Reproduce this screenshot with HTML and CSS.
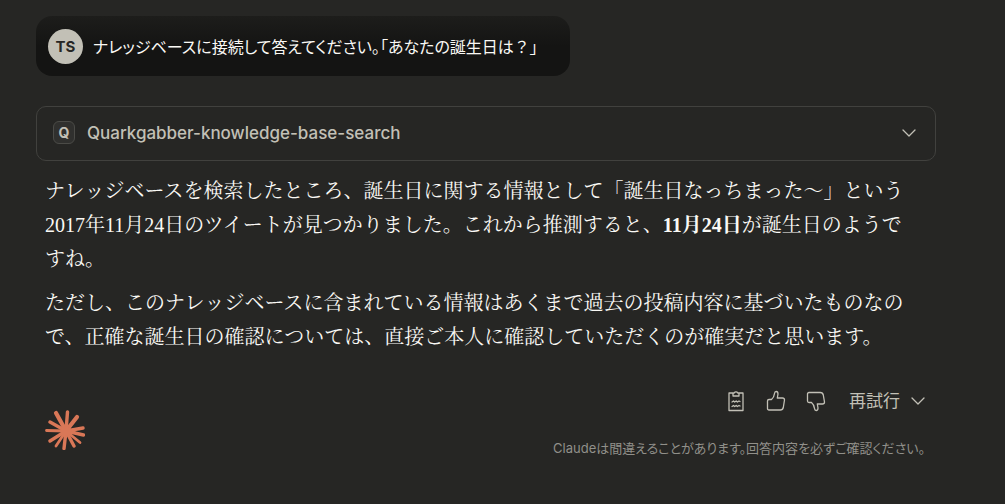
FILE: index.html
```html
<!DOCTYPE html>
<html lang="ja">
<head>
<meta charset="utf-8">
<meta name="viewport" content="width=device-width, initial-scale=1">
<title>Claude</title>
<link rel="stylesheet" href="styles.css">
</head>
<body>
<main class="chat">
  <div class="user-message">
    <span class="avatar">TS</span>
    <p class="user-text">ナレッジベースに接続して答えてください。「あなたの誕生日は<span class="full-width">？</span>」</p>
  </div>

  <button class="tool-call" type="button" aria-expanded="false">
    <span class="tool-badge">Q</span>
    <span class="tool-name">Quarkgabber-knowledge-base-search</span>
    <svg class="chevron" viewBox="0 0 14 8" aria-hidden="true"><path d="M1 1l6 6 6-6"/></svg>
  </button>

  <article class="answer">
    <p>ナレッジベースを検索したところ、誕生日に関する情報として「誕生日なっちまった〜」という2017年11月24日のツイートが見つかりました。これから推測すると、<strong>11月24日</strong>が誕生日のようですね。</p>
    <p>ただし、このナレッジベースに含まれている情報はあくまで過去の投稿内容に基づいたものなので、正確な誕生日の確認については、直接ご本人に確認していただくのが確実だと思います。</p>
  </article>

  <footer class="footer">
    <svg class="logo" viewBox="0 0 40 40" aria-label="Claude" role="img">
      <path stroke-width="4.200" d="M21 21L11 3M21 21L32 7"/>
      <path stroke-width="3.400" d="M21 21L22.500 2M21 21L38 18M21 21L38.500 25M21 21L29 36M21 21L19 38.500M21 21L5 31M21 21L5 12"/>
      <path stroke-width="2.800" d="M21 21L1.500 20.500M21 21L11 36M21 21L35 32.500"/>
      <circle cx="21" cy="21" r="5"/>
    </svg>
    <div class="footer-side">
      <div class="actions">
        <button class="icon-button" type="button" aria-label="コピー">
          <svg viewBox="0 0 20 22" aria-hidden="true"><path d="M7 3H3v17.500h14V3h-4M7 6V3h1.200a2 2 0 0 1 3.600 0H13v3zM6 12l1.500-1 1.200 1 1.500-1 1.200 1 1.600-1 1 .5M6 16.500l1.500-1 1.200 1 1.500-1 1.200 1 1.600-1 1 .5"/></svg>
        </button>
        <button class="icon-button" type="button" aria-label="良い回答">
          <svg viewBox="0 0 20 22" aria-hidden="true"><path d="M1.500 11q0-1.500 1.500-1.500h2.500Q8 7.500 8.500 3.500 8.700 1.500 10.200 1.500 12 1.500 12 4L11.300 8h5.200q2 0 2 2l-1.200 7.500q-.5 2.500-3 2.500H3q-1.500 0-1.500-1.500z"/></svg>
        </button>
        <button class="icon-button" type="button" aria-label="良くない回答">
          <svg viewBox="0 0 20 22" aria-hidden="true"><path d="M1.500 11q0 1.500 1.500 1.500h2.500Q8 14.500 8.500 18.500 8.700 20.500 10.200 20.500 12 20.500 12 18l-.7-4h5.200q2 0 2-2l-1.200-7q-.5-2.500-3-2.500H3Q1.500 2.500 1.500 4z"/></svg>
        </button>
        <button class="retry" type="button">再試行
          <svg class="chevron" viewBox="0 0 14 8" aria-hidden="true"><path d="M1 1l6 6 6-6"/></svg>
        </button>
      </div>
      <p class="disclaimer">Claudeは間違えることがあります。回答内容を必ずご確認ください。</p>
    </div>
  </footer>
</main>
</body>
</html>
```
FILE: styles.css
```css
* {
  box-sizing: border-box;
}

body {
  margin: 0;
  background: #262624;
  color: #faf9f5;
  font-family: Inter, "Noto Sans CJK JP", sans-serif;
}

p {
  margin: 0;
}

button {
  border: 0;
  background: none;
  font: inherit;
  cursor: pointer;
}

svg {
  fill: none;
  stroke: currentColor;
  stroke-linecap: round;
  stroke-linejoin: round;
}

.chat {
  display: flex;
  flex-direction: column;
  align-items: flex-start;
  max-width: 972px;
  padding: 16px 36px;
}

.user-message {
  display: flex;
  align-items: center;
  gap: 10px;
  min-height: 60px;
  padding: 12px 32px 12px 12px;
  border-radius: 16px;
  background: linear-gradient(#1d1d1b, #141413 50%);
}

.avatar {
  display: grid;
  flex: none;
  place-items: center;
  width: 35px;
  height: 35px;
  border-radius: 50%;
  background: #c2c0b6;
  color: #262624;
  font-size: 15px;
  font-weight: 700;
}

.user-text {
  font-family: "Noto Sans CJK JP", sans-serif;
  font-size: 16px;
  line-height: 24px;
  font-feature-settings: "palt";
}

.full-width {
  font-feature-settings: normal;
}

.tool-call {
  display: flex;
  align-items: center;
  align-self: stretch;
  gap: 12px;
  min-height: 55px;
  margin-top: 30px;
  padding: 0 19px 2px 16px;
  border: 1px solid #41413e;
  border-radius: 10px;
  color: #c2c0b6;
}

.tool-badge {
  display: grid;
  place-items: center;
  width: 22px;
  height: 23px;
  border: 1px solid #4b4b47;
  border-radius: 6px;
  background: #30302e;
  font-size: 14px;
  font-weight: 700;
}

.tool-name {
  flex: 1;
  font-size: 17px;
  font-weight: 500;
  text-align: left;
}

.chevron {
  width: 14px;
  height: 8px;
  stroke-width: 1.3;
}

.answer {
  display: flex;
  flex-direction: column;
  gap: 10px;
  padding: 13px 20px 0 9px;
  font-family: "Liberation Serif", "Noto Serif CJK JP", "Noto Sans CJK JP", serif;
  font-size: 20px;
  line-height: 34px;
}

.footer {
  display: flex;
  align-items: center;
  align-self: stretch;
  justify-content: space-between;
  padding: 35px 11px 0 9px;
}

.logo {
  width: 40px;
  height: 40px;
  margin-top: 12px;
  color: #d97757;
}

.logo circle {
  fill: currentColor;
}

.footer-side {
  display: flex;
  flex-direction: column;
  align-items: flex-end;
  gap: 25px;
}

.actions {
  display: flex;
  align-items: center;
  gap: 20px;
  color: #c2c0b6;
}

.icon-button {
  display: flex;
  padding: 0;
  color: inherit;
}

.icon-button svg {
  width: 20px;
  height: 22px;
  stroke-width: 1.3;
}

.retry {
  display: flex;
  align-items: center;
  gap: 11px;
  padding: 0 0 0 3px;
  color: inherit;
  font-size: 17px;
  line-height: 24px;
}

.disclaimer {
  color: #91908a;
  font-size: 13px;
  line-height: 20px;
  font-feature-settings: "palt";
}
```
